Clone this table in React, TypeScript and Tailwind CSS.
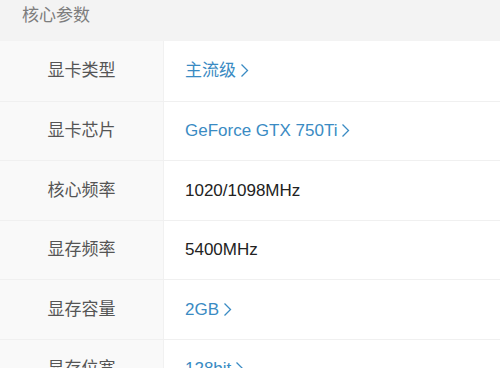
import React from 'react';

type Spec = { label: string; value: string; link?: boolean };

const specs: Spec[] = [
  { label: '显卡类型', value: '主流级', link: true },
  { label: '显卡芯片', value: 'GeForce GTX 750Ti', link: true },
  { label: '核心频率', value: '1020/1098MHz' },
  { label: '显存频率', value: '5400MHz' },
  { label: '显存容量', value: '2GB', link: true },
  { label: '显存位宽', value: '128bit', link: true },
];

function Chevron() {
  return (
    <svg width="9" height="15" viewBox="0 0 9 15" className="ml-[4px] shrink-0">
      <polyline points="1.5,1.5 7.5,7.5 1.5,13.5" fill="none" stroke="currentColor" strokeWidth="1.3" />
    </svg>
  );
}

export default function App() {
  return (
    <div
      className="w-[500px] h-[368px] overflow-hidden bg-white"
      style={{ fontFamily: '"Liberation Sans", "Noto Sans CJK SC", sans-serif' }}
    >
      {/* Section header */}
      <div className="h-[41px] bg-[#f3f3f3] pl-[22px] flex items-center pb-[9px]">
        <span className="text-[17px] text-[#7d7d7d]">核心参数</span>
      </div>

      {specs.map((s, i) => (
        <div
          key={s.label}
          className={`flex h-[59.5px] ${i > 0 ? 'border-t border-[#f0f0f0]' : ''}`}
        >
          <div className="w-[164px] shrink-0 bg-[#f9f9f9] border-r border-[#f1f1f1] flex items-center justify-center">
            <span className="text-[17px] text-[#555555]">{s.label}</span>
          </div>
          <div className="flex-1 flex items-center pl-[21px]">
            {s.link ? (
              <span className="flex items-center text-[17px] text-[#3a8bc3]">
                {s.value}
                <Chevron />
              </span>
            ) : (
              <span className="text-[17px] text-[#222222]">{s.value}</span>
            )}
          </div>
        </div>
      ))}
    </div>
  );
}
